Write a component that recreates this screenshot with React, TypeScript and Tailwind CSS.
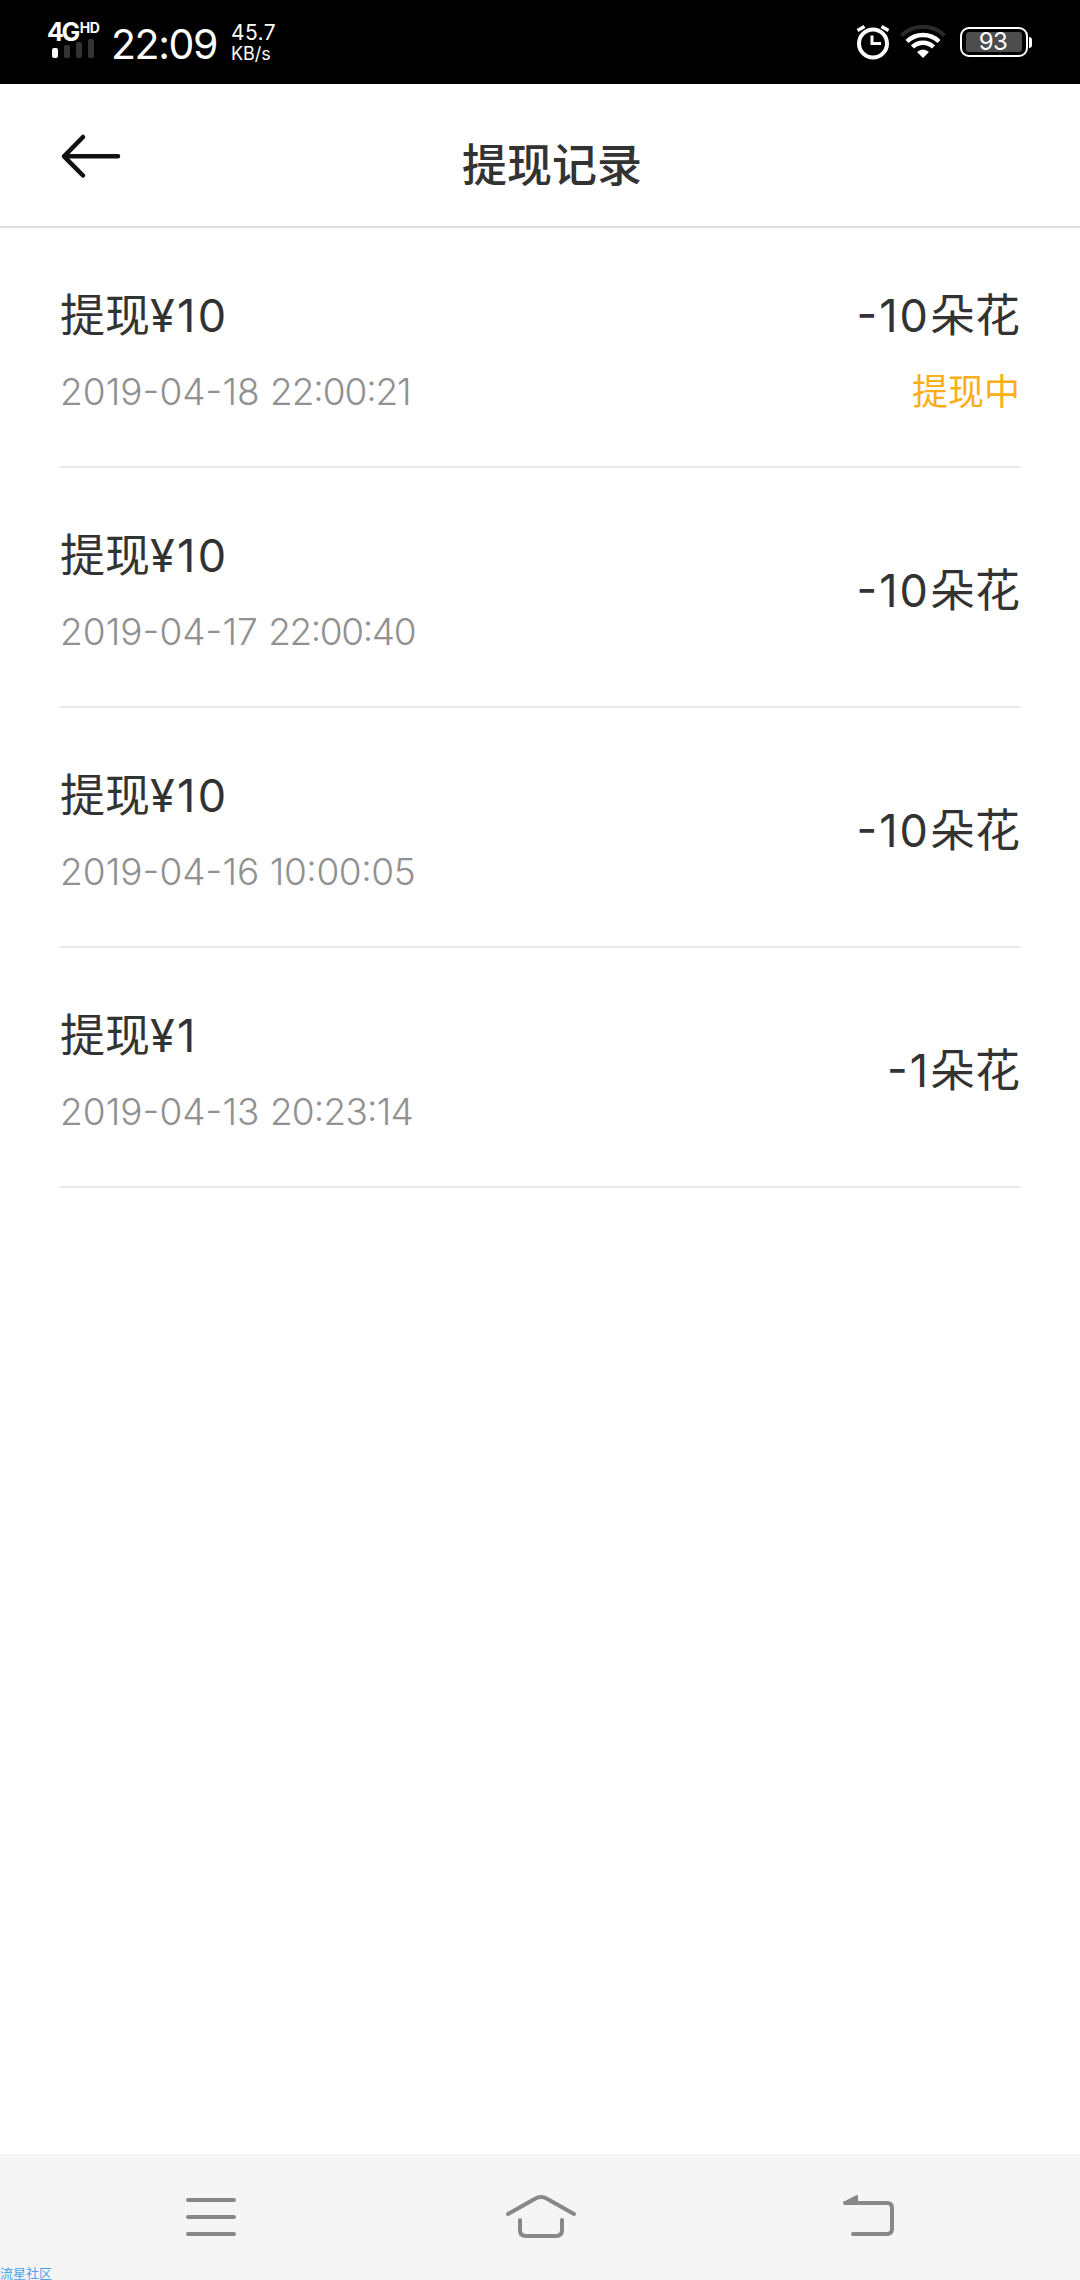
type WithdrawRecord = {
  title: string;
  money: string;
  date: string;
  time: string;
  // tracking per row, keeps the proportional digits about the same width
  timeClass: string;
  flowers: string;
  status?: string;
};

const records: WithdrawRecord[] = [
  {
    title: "提现",
    money: "¥10",
    date: "2019-04-18",
    time: "22:00:21",
    timeClass: "tracking-[-1.1px]",
    flowers: "-10",
    status: "提现中",
  },
  {
    title: "提现",
    money: "¥10",
    date: "2019-04-17",
    time: "22:00:40",
    timeClass: "tracking-[-1.4px]",
    flowers: "-10",
  },
  {
    title: "提现",
    money: "¥10",
    date: "2019-04-16",
    time: "10:00:05",
    timeClass: "tracking-[-0.4px]",
    flowers: "-10",
  },
  {
    title: "提现",
    money: "¥1",
    date: "2019-04-13",
    time: "20:23:14",
    timeClass: "tracking-[-0.8px]",
    flowers: "-1",
  },
];

const Signal = () => (
  <div className="flex flex-col w-[54px]">
    <div className="flex items-start font-bold whitespace-nowrap leading-none">
      <span className="-ml-px text-[25px] leading-[20px] tracking-[-2.5px]">4G</span>
      <span className="ml-[2px] text-[14px] leading-[12px] tracking-[-0.5px]">HD</span>
    </div>
    <div className="flex items-end gap-[6px] h-[16px] ml-[4px]">
      <span className="w-[6px] h-[10px] rounded-[2px] bg-white" />
      <span className="w-[6px] h-[13px] rounded-[2px] bg-[#333]" />
      <span className="w-[6px] h-[16px] rounded-[2px] bg-[#333]" />
      <span className="w-[6px] h-[19px] rounded-[2px] bg-[#333]" />
    </div>
  </div>
);

const AlarmIcon = () => (
  <svg width="34" height="36" viewBox="0 0 34 36" fill="none" stroke="#fff">
    <circle cx="17" cy="19.500" r="14" strokeWidth="4" />
    <path d="M16 11.500V19.500H25" strokeWidth="3" />
    <path d="M1.500 6.500L8.500 2.500M32.500 6.500L25.500 2.500" strokeWidth="3.500" />
  </svg>
);

const WifiIcon = () => (
  <svg width="46" height="34" viewBox="0 0 46 34" fill="none">
    <path d="M1.500 10.500A31 31 0 0 1 44.500 10.500" stroke="#2b2b2b" strokeWidth="4" />
    <path d="M7 16.500A23 23 0 0 1 39 16.500" stroke="#fff" strokeWidth="4.500" />
    <path d="M12.500 22A15 15 0 0 1 33.500 22" stroke="#fff" strokeWidth="4.500" />
    <path d="M17 27Q23 22 29 27L23 33Z" fill="#fff" />
  </svg>
);

const Battery = () => (
  <div className="flex items-center">
    <div className="w-[68px] h-[30px] p-[3px] rounded-[9px] border-2 border-white">
      <div className="flex items-center justify-center w-[56px] ml-[1px] h-[20px] rounded-[3px] bg-[#4d4d4d] pr-[2px] text-[24px] leading-none tracking-[-0.5px]">
        93
      </div>
    </div>
    <div className="w-[3px] h-[11px] ml-[1px] rounded-r-[3px] bg-white" />
  </div>
);

const StatusBar = () => (
  <div className="flex justify-between h-[84px] bg-black text-white pl-[48px] pr-[48px]">
    <div className="flex">
      <div className="pt-[22px]">
        <Signal />
      </div>
      <span className="w-[108px] ml-[9px] mt-[19px] text-[41px] leading-[50px] tracking-[-1.4px] whitespace-nowrap">
        22:09
      </span>
      <div className="ml-[12px] mt-[23px] text-[21px] leading-[20px] whitespace-nowrap">
        <div className="tracking-[0.4px]">45.7</div>
        <div className="mt-[1px] text-[18px]">KB/s</div>
      </div>
    </div>
    <div className="flex items-start">
      <div className="mt-[24px]">
        <AlarmIcon />
      </div>
      <div className="ml-[10px] mt-[25px]">
        <WifiIcon />
      </div>
      <div className="ml-[14px] mt-[27px]">
        <Battery />
      </div>
    </div>
  </div>
);

const Header = () => (
  <div className="flex h-[144px] border-b-2 border-[#dedede]">
    <svg
      className="ml-[60px] mt-[48px] shrink-0"
      width="62"
      height="48"
      viewBox="0 0 62 48"
      fill="none"
      stroke="#111"
      strokeWidth="4.500"
      strokeLinecap="round"
      strokeLinejoin="round"
    >
      <path d="M23 5L4 24.300L23 43.500M4 24.300H58" />
    </svg>
    <h1 className="ml-[340px] mt-[51px] text-[45px] leading-[62px] font-medium whitespace-nowrap text-[#333]">
      提现记录
    </h1>
  </div>
);

const RecordItem = ({
  title,
  money,
  date,
  time,
  timeClass,
  flowers,
  status,
}: WithdrawRecord) => (
  <li className="flex justify-between items-center h-[240px] pt-[8px] border-b-2 border-[#e8e8e8] whitespace-nowrap">
    <div>
      <div className="text-[45px] leading-[66px] text-[#333]">
        {title}
        <span className="tracking-[2.3px]">{money}</span>
      </div>
      <div className="mt-[16px] text-[37px] leading-[54px] font-light text-[#919191] [font-feature-settings:'calt'_0,'case'_1]">
        <span className="tracking-[0.05px]">{date}</span>{" "}
        <span className={timeClass}>{time}</span>
      </div>
    </div>
    <div className="text-right">
      <div className="text-[45px] leading-[66px] text-[#333] [font-feature-settings:'calt'_0,'case'_1]">
        <span className="tracking-[2px]">{flowers}</span>
        朵花
      </div>
      {status && (
        <div className="mt-[16px] text-[36px] leading-[54px] text-[#faaf19]">
          {status}
        </div>
      )}
    </div>
  </li>
);

const NavBar = () => (
  <div className="relative flex h-[126px] bg-[#f5f5f5]">
    <svg
      className="ml-[180px] mt-[36px]"
      width="60"
      height="54"
      viewBox="0 0 60 54"
      stroke="#888"
      strokeWidth="4"
      strokeLinecap="round"
    >
      <path d="M8 10H54M8 27H54M8 44H54" />
    </svg>
    <svg
      className="ml-[260px] mt-[36px]"
      width="82"
      height="54"
      viewBox="0 0 82 54"
      fill="none"
      stroke="#888"
      strokeWidth="4"
      strokeLinecap="round"
    >
      <path d="M8 24L35 8.800Q41 5.200 47 8.800L74 24" />
      <path d="M20 30V40Q20 46 26 46H56Q62 46 62 40V30" />
    </svg>
    <svg
      className="ml-[258px] mt-[36px]"
      width="60"
      height="54"
      viewBox="0 0 60 54"
      fill="none"
      stroke="#888"
      strokeWidth="4"
      strokeLinecap="round"
    >
      <path d="M5 13H47Q52 13 52 18V39Q52 44 47 44H13" />
      <path d="M4.500 12.500L17 6V13Z" fill="#888" strokeWidth="2" strokeLinejoin="round" />
    </svg>
    <span className="absolute left-0 bottom-0 text-[13px] leading-[13px] text-[#4aa3e8]">
      流星社区
    </span>
  </div>
);

const App = () => (
  <div className="flex flex-col w-[1080px] h-[2280px] overflow-hidden bg-white font-['Inter','Noto_Sans_CJK_SC',sans-serif] [font-feature-settings:'calt'_0]">
    <StatusBar />
    <Header />
    <ul className="flex-1 px-[60px]">
      {records.map((record) => (
        <RecordItem key={record.date} {...record} />
      ))}
    </ul>
    <NavBar />
  </div>
);

export default App;
